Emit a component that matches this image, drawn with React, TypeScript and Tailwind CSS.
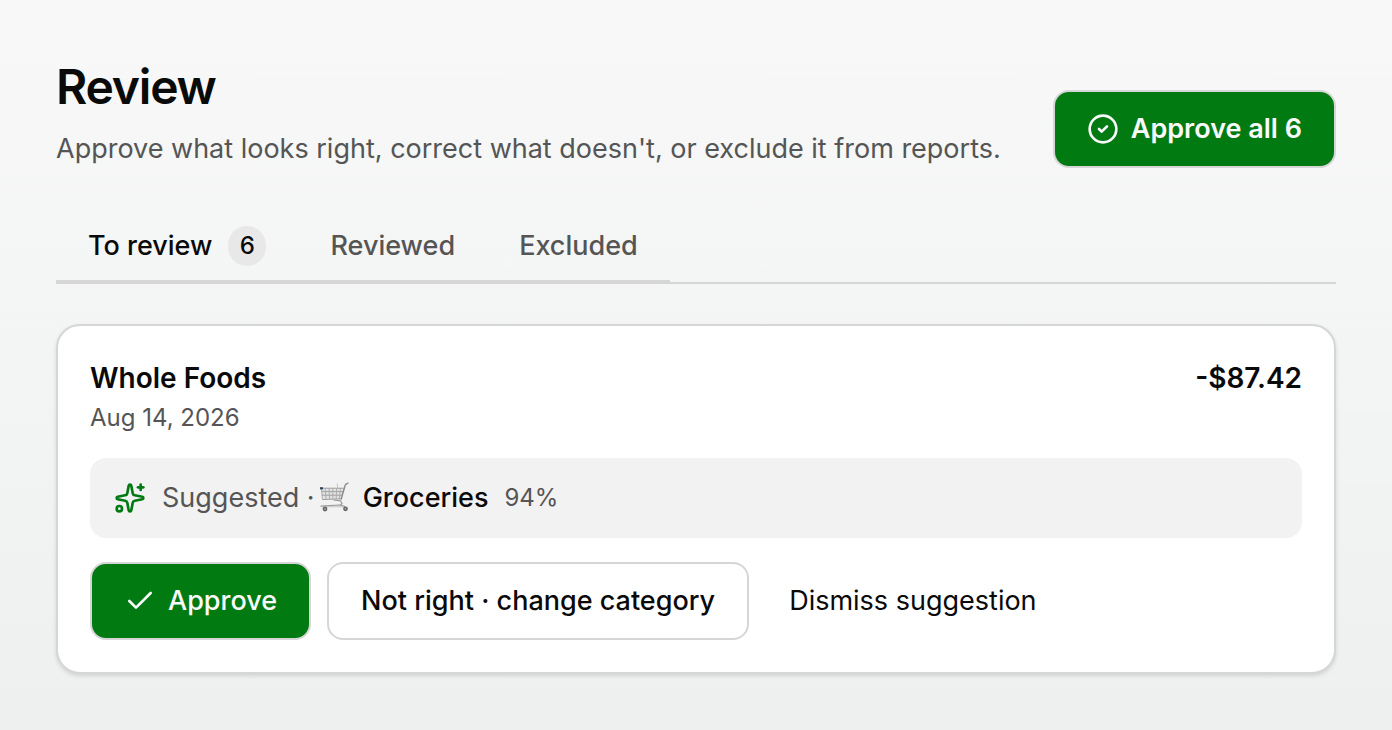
import { Check, CircleCheck, Sparkles } from "lucide-react";

function CartIcon() {
  return (
    <svg viewBox="0 0 30 30" className="mb-0.5 h-[30px] w-[30px] shrink-0" fill="none" aria-hidden="true">
      <path d="M2 6h23.5L22 17l-18.500.8z" fill="#e2e2e2" />
      <path d="M1.500 6.200h23.500M2.400 9.600h21.600M2.900 13.200h20M3.400 17.600l18.800-.8" stroke="#a0a0a0" strokeWidth="1" />
      <path d="M2.300 6l1.200 11.500M6.200 6l.9 11.500M10 6l.6 11.300M13.800 6v11.200M17.600 6l-.4 11M21.400 6l-1 10.900" stroke="#a8a8a8" strokeWidth="0.9" />
      <path d="M18.200 1.500l.5 4.500" stroke="#c0c0c0" strokeWidth="0.9" />
      <path d="M29 1l-2.600 1.600L22.200 17" stroke="#898989" strokeWidth="1.400" strokeLinecap="round" strokeLinejoin="round" />
      <path d="M15 18l6.500.8 1.500 2.700-1.500 1.500M2 24.200l19-1.200 5 1.600" stroke="#999999" strokeWidth="1.200" strokeLinecap="round" />
      <path d="M2.500 24.800h23" stroke="#bdbdbd" strokeWidth="0.8" />
      <rect x="1" y="5.200" width="3" height="2.200" fill="#33475c" />
      <circle cx="6" cy="27" r="2.400" fill="#6b676a" />
      <circle cx="26.500" cy="26.800" r="2.400" fill="#6b676a" />
      <circle cx="6" cy="27" r="0.800" fill="#b5b5b5" />
      <circle cx="26.500" cy="26.800" r="0.800" fill="#b5b5b5" />
    </svg>
  );
}

export default function App() {
  return (
    <main className="min-h-screen bg-linear-to-b from-[#f8f8f8] via-[#f3f5f4] to-[#edf0ef] px-14 pt-14 pb-14 font-['Inter',sans-serif] text-[27px] leading-10 text-[#0a0a0a]">
      <header className="flex items-end justify-between gap-8">
        <div>
          <h1 className="text-5xl leading-[62px] font-semibold tracking-tight">Review</h1>
          <p className="mt-3 leading-[38px] text-[#555555]">
            Approve what looks right, correct what doesn't, or exclude it from reports.
          </p>
        </div>
        <button
          type="button"
          className="flex h-[78px] shrink-0 items-center gap-3 rounded-2xl border-2 border-[#d6d6d6] bg-[#027a12] px-8 font-semibold text-[#fafafa]"
        >
          <CircleCheck size={32} aria-hidden="true" />
          Approve all 6
        </button>
      </header>

      <div className="mt-10 border-b-2 border-[#d6d6d6]">
        <div role="tablist" className="-mb-0.5 inline-flex border-b-4 border-[#d6d6d6] align-top font-medium">
          <button type="button" role="tab" aria-selected="true" className="flex h-[72px] items-center gap-4 px-8 pt-1">
            To review
            <span className="flex h-10 w-[38px] items-center justify-center rounded-full bg-[#e8e8e8] text-2xl">6</span>
          </button>
          <button type="button" role="tab" aria-selected="false" className="h-[72px] px-8 pt-1 text-[#555555]">
            Reviewed
          </button>
          <button type="button" role="tab" aria-selected="false" className="h-[72px] px-8 pt-1 text-[#555555]">
            Excluded
          </button>
        </div>
      </div>

      <article className="mt-10 rounded-3xl border-2 border-[#d6d6d6] bg-white p-8 shadow-[0_2px_4px_rgba(0,0,0,0.12)]">
        <div className="flex items-start justify-between gap-6 text-[28px] leading-10">
          <div>
            <h2 className="font-semibold">Whole Foods</h2>
            <p className="text-2xl leading-10 text-[#555555]">Aug 14, 2026</p>
          </div>
          <p className="font-semibold">-$87.42</p>
        </div>
        <div className="mt-5 flex h-20 items-center rounded-2xl bg-[#f2f2f2] px-6">
          <Sparkles size={32} className="mr-4 text-[#027a12]" aria-hidden="true" />
          <span className="mr-1 text-[#555555]">Suggested ·</span>
          <CartIcon />
          <span className="ml-3.5 font-medium">Groceries</span>
          <span className="ml-4 text-2xl text-[#555555]">94%</span>
        </div>
        <div className="mt-6 flex flex-wrap items-center gap-4">
          <button
            type="button"
            className="flex h-[78px] items-center gap-3 rounded-2xl border-2 border-[#d6d6d6] bg-[#027a12] px-8 font-medium text-[#fafafa]"
          >
            <Check size={32} aria-hidden="true" />
            Approve
          </button>
          <button type="button" className="h-[78px] rounded-2xl border-2 border-[#d6d6d6] bg-white px-8 font-medium">
            Not right · change category
          </button>
          <button type="button" className="h-[78px] px-6">
            Dismiss suggestion
          </button>
        </div>
      </article>
    </main>
  );
}
